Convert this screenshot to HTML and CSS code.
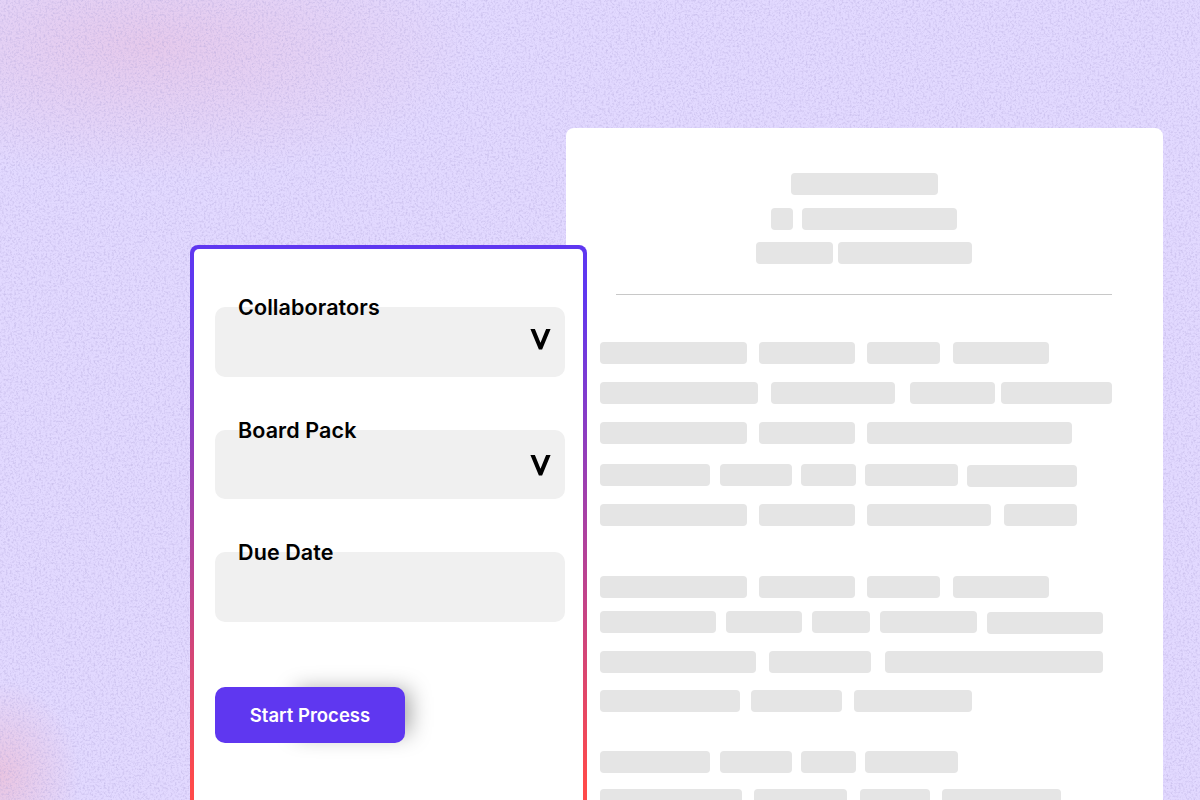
FILE: index.html
```html
<!DOCTYPE html>
<html lang="en">
<head>
    <meta charset="UTF-8">
    <title>Start Process</title>
    <link rel="stylesheet" href="styles.css">
</head>
<body>
    <div class="scene">
        <svg class="grain" width="1200" height="800">
            <filter id="noise">
                <feTurbulence type="fractalNoise" baseFrequency="0.48" numOctaves="3" seed="4"/>
                <feColorMatrix type="matrix" values="0 0 0 0 0.42  0 0 0 0 0.36  0 0 0 0 0.68  2.6 0 0 0 -1.15"/>
            </filter>
            <rect width="1200" height="800" filter="url(#noise)"/>
        </svg>

        <div class="paper">
            <div class="paper-head">
                <div class="row"><span class="bar w147"></span></div>
                <div class="row mt13"><span class="bar w22"></span><span class="bar w155 m9"></span></div>
                <div class="row mt12"><span class="bar w77"></span><span class="bar w134 m5"></span></div>
            </div>
            <div class="rule"></div>

            <div class="para">
                <div class="row"><span class="bar w147"></span><span class="bar w96"></span><span class="bar w73"></span><span class="bar w96 m13"></span></div>
                <div class="row mt18"><span class="bar w158"></span><span class="bar w124 m13"></span><span class="bar w85 m15"></span><span class="bar w111 m6"></span></div>
                <div class="row mt18"><span class="bar w147"></span><span class="bar w96"></span><span class="bar w205"></span></div>
                <div class="row mt20"><span class="bar w110"></span><span class="bar w72 m10"></span><span class="bar w55 m9"></span><span class="bar w93 m9"></span><span class="bar w110 m9 nudge"></span></div>
                <div class="row mt17"><span class="bar w147"></span><span class="bar w96"></span><span class="bar w124"></span><span class="bar w73 m13"></span></div>
            </div>

            <div class="para">
                <div class="row"><span class="bar w147"></span><span class="bar w96"></span><span class="bar w73"></span><span class="bar w96 m13"></span></div>
                <div class="row mt13"><span class="bar w116"></span><span class="bar w76 m10"></span><span class="bar w58 m10"></span><span class="bar w97 m10"></span><span class="bar w116 m10 nudge"></span></div>
                <div class="row mt17"><span class="bar w156"></span><span class="bar w102 m13"></span><span class="bar w218 m14"></span></div>
                <div class="row mt17"><span class="bar w140"></span><span class="bar w91 m11"></span><span class="bar w118"></span></div>
            </div>

            <div class="para last">
                <div class="row"><span class="bar w110"></span><span class="bar w72 m10"></span><span class="bar w55 m9"></span><span class="bar w93 m9"></span></div>
                <div class="row mt16"><span class="bar w142"></span><span class="bar w93"></span><span class="bar w70 m13"></span><span class="bar w119"></span></div>
            </div>
        </div>

        <div class="panel">
            <div class="panel-inner">
                <div class="field">
                    <label>Collaborators</label>
                    <div class="box">
                        <svg class="chevron" width="21" height="21" viewBox="0 0 21 21"><polygon points="0.4,0 4.9,0 10.5,13.8 16.1,0 20.6,0 12.1,20.5 8.9,20.5"/></svg>
                    </div>
                </div>
                <div class="field">
                    <label>Board Pack</label>
                    <div class="box box-low">
                        <svg class="chevron" width="21" height="21" viewBox="0 0 21 21"><polygon points="0.4,0 4.9,0 10.5,13.8 16.1,0 20.6,0 12.1,20.5 8.9,20.5"/></svg>
                    </div>
                </div>
                <div class="field">
                    <label>Due Date</label>
                    <div class="box"></div>
                </div>
                <button class="start-btn">Start Process</button>
            </div>
        </div>
    </div>
</body>
</html>
```

FILE: styles.css
```css
* {
    margin: 0;
    padding: 0;
    box-sizing: border-box;
}

body {
    width: 1200px;
    height: 800px;
    overflow: hidden;
    font-family: 'Inter', sans-serif;
}

.scene {
    position: relative;
    width: 1200px;
    height: 800px;
    overflow: hidden;
    background:
        radial-gradient(ellipse 330px 135px at 150px 45px, rgba(234, 186, 216, 0.5), rgba(234, 186, 216, 0) 100%),
        radial-gradient(ellipse 80px 95px at 0 775px, rgba(240, 180, 200, 0.55), rgba(240, 180, 200, 0) 100%),
        #e2d9ff;
}

.grain {
    position: absolute;
    top: 0;
    left: 0;
    opacity: 0.4;
}

/* document behind the form */
.paper {
    position: absolute;
    left: 566px;
    top: 128px;
    width: 597px;
    height: 700px;
    padding: 45px 35px 0 34px;
    background-color: white;
    border-radius: 8px;
}

.paper-head .row {
    justify-content: center;
}

.rule {
    height: 1px;
    margin: 30px 16px 47px 16px;
    background-color: #c8c8c8;
}

.para {
    margin-bottom: 50px;
}

.para.last {
    margin-top: -11px;
}

.row {
    display: flex;
    align-items: flex-start;
}

.bar {
    display: block;
    height: 22px;
    background-color: #e5e5e5;
    border-radius: 4px;
}

.bar + .bar { margin-left: 12px; }

.bar.m5 { margin-left: 5px; }
.bar.m6 { margin-left: 6px; }
.bar.m9 { margin-left: 9px; }
.bar.m10 { margin-left: 10px; }
.bar.m11 { margin-left: 11px; }
.bar.m13 { margin-left: 13px; }
.bar.m14 { margin-left: 14px; }
.bar.m15 { margin-left: 15px; }

.nudge { margin-top: 1px; }

.mt12 { margin-top: 12px; }
.mt13 { margin-top: 13px; }
.mt16 { margin-top: 16px; }
.mt17 { margin-top: 17px; }
.mt18 { margin-top: 18px; }
.mt20 { margin-top: 20px; }

.w22 { width: 22px; }
.w55 { width: 55px; }
.w58 { width: 58px; }
.w70 { width: 70px; }
.w72 { width: 72px; }
.w73 { width: 73px; }
.w76 { width: 76px; }
.w77 { width: 77px; }
.w85 { width: 85px; }
.w91 { width: 91px; }
.w93 { width: 93px; }
.w96 { width: 96px; }
.w97 { width: 97px; }
.w102 { width: 102px; }
.w110 { width: 110px; }
.w111 { width: 111px; }
.w116 { width: 116px; }
.w118 { width: 118px; }
.w119 { width: 119px; }
.w124 { width: 124px; }
.w134 { width: 134px; }
.w140 { width: 140px; }
.w142 { width: 142px; }
.w147 { width: 147px; }
.w155 { width: 155px; }
.w156 { width: 156px; }
.w158 { width: 158px; }
.w205 { width: 205px; }
.w218 { width: 218px; }

/* form card, gradient border */
.panel {
    position: absolute;
    left: 190px;
    top: 245px;
    width: 397px;
    height: 600px;
    padding: 4px;
    border-radius: 8px;
    background: linear-gradient(180deg, #5f37f0 0%, #5f37f0 8%, #ff4a4a 90%);
}

.panel-inner {
    position: relative;
    z-index: 0;
    height: 100%;
    padding: 58px 18px 0 21px;
    background-color: white;
    border-radius: 5px;
}

.field {
    position: relative;
    height: 69.5px;
    margin-bottom: 53px;
}

.field label {
    position: absolute;
    left: 23px;
    top: -13px;
    font-size: 21.5px;
    font-weight: 600;
    letter-spacing: 0.1px;
    line-height: 26px;
    color: #000;
}

.box {
    display: flex;
    justify-content: flex-end;
    align-items: flex-start;
    height: 100%;
    padding: 22px 14px 0 0;
    background-color: #f0f0f0;
    border-radius: 10px;
}

.box-low {
    padding-top: 25px;
}

.start-btn {
    position: relative;
    display: block;
    width: 190px;
    height: 56px;
    margin-top: 65.5px;
    font-family: inherit;
    font-size: 18.5px;
    font-weight: 600;
    color: white;
    background-color: #5f37f0;
    border: none;
    border-radius: 10px;
}

/* shadow only shows on the right half of the button */
.start-btn::before {
    content: "";
    position: absolute;
    z-index: -1;
    left: 75px;
    right: 2px;
    top: 6px;
    bottom: 6px;
    box-shadow: 6px -3px 22px rgba(0, 0, 0, 0.38);
}
```
